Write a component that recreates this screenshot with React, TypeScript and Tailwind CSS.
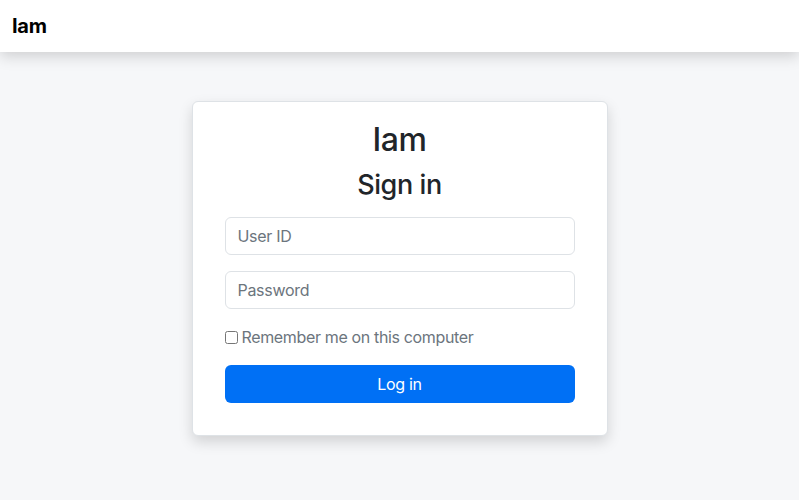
import { useState } from 'react';

export default function App() {
  const [remember, setRemember] = useState(false);

  return (
    <div className="min-h-[500px] bg-[#f6f7f9] font-['Inter',sans-serif] text-[#212529]">
      {/* Top bar */}
      <header className="h-[52px] bg-white shadow-[0_4px_14px_rgba(0,0,0,0.17)] flex items-center px-3">
        <span className="text-[20px] font-bold text-black tracking-[-0.3px]">Iam</span>
      </header>

      <main className="flex justify-center pt-[49px]">
        <div className="w-[416px] bg-white border border-[#dee2e6] rounded-md shadow-[0_6px_14px_rgba(0,0,0,0.15)] px-8 pt-[18px] pb-8">
          <h1 className="text-center text-[32px] leading-[40px] font-medium tracking-[-0.5px]">Iam</h1>
          <h2 className="text-center text-[27px] leading-[34px] font-medium mt-[8px] mb-[15px] tracking-[-0.4px]">Sign in</h2>

          <div className="flex flex-col gap-4">
            <input
              type="text"
              placeholder="User ID"
              className="h-[38px] w-full rounded-md border border-[#dee2e6] px-3 text-base tracking-[-0.3px] text-[#212529] placeholder:text-[#6c757d] outline-none"
            />
            <input
              type="password"
              placeholder="Password"
              className="h-[38px] w-full rounded-md border border-[#dee2e6] px-3 text-base tracking-[-0.3px] text-[#212529] placeholder:text-[#6c757d] outline-none"
            />
          </div>

          <label className="flex items-center gap-[4px] mt-[16px] text-base tracking-[-0.35px] text-[#6c757d]">
            <input
              type="checkbox"
              checked={remember}
              onChange={() => setRemember(!remember)}
              className="w-[13px] h-[13px] m-0"
            />
            Remember me on this computer
          </label>

          <button className="mt-[16px] h-[38px] w-full rounded-md bg-[#0070f5] text-white text-base tracking-[-0.3px]">
            Log in
          </button>
        </div>
      </main>
    </div>
  );
}
